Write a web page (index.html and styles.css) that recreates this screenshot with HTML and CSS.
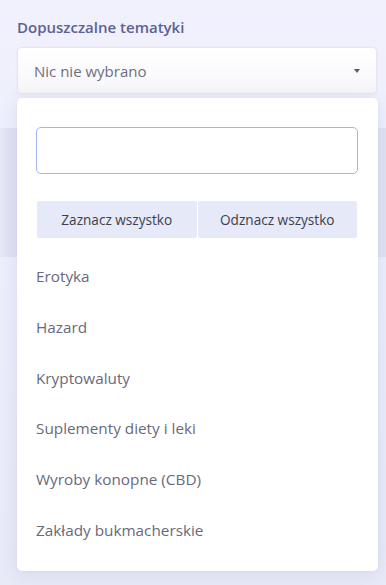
FILE: index.html
```html
<!DOCTYPE html>
<html lang="pl">
<head>
<meta charset="utf-8">
<title>Dopuszczalne tematyki</title>
<link rel="stylesheet" href="styles.css">
</head>
<body>
<div class="page">
  <div class="field">
    <label class="label">Dopuszczalne tematyki</label>
    <div class="select">
      <span class="select-text">Nic nie wybrano</span>
      <span class="caret"></span>
    </div>
    <div class="menu">
      <input class="search" type="text" aria-label="Szukaj">
      <div class="actions">
        <button class="action">Zaznacz wszystko</button>
        <button class="action">Odznacz wszystko</button>
      </div>
      <ul class="options">
        <li class="option">Erotyka</li>
        <li class="option">Hazard</li>
        <li class="option">Kryptowaluty</li>
        <li class="option">Suplementy diety i leki</li>
        <li class="option">Wyroby konopne (CBD)</li>
        <li class="option">Zakłady bukmacherskie</li>
      </ul>
    </div>
  </div>
</div>
<div class="band"></div>
</body>
</html>
```
FILE: styles.css
```css
html, body {
  margin: 0;
  padding: 0;
}
body {
  width: 386px;
  height: 585px;
  overflow: hidden;
  background: linear-gradient(180deg, #f0f1fd 0%, #eceefb 50%, #e8eaf8 100%);
  font-family: "Open Sans", "Noto Sans", sans-serif;
}
.page {
  padding: 17px 9px 0 17px;
}
.field {
  position: relative;
}
.label {
  display: block;
  font-size: 15px;
  line-height: 21px;
  font-weight: 600;
  color: #5d6193;
  margin-bottom: 9px;
}
.select {
  box-sizing: border-box;
  height: 47px;
  display: flex;
  align-items: center;
  justify-content: space-between;
  padding: 0 16px;
  background: linear-gradient(180deg, #ffffff 0%, #fafafc 60%, #f5f5f8 100%);
  border: 1px solid #e6e6ee;
  border-radius: 4px;
  box-shadow: 0 1px 3px rgba(60, 60, 110, 0.06);
}
.select-text {
  font-size: 15px;
  color: #6d6e82;
}
.caret {
  width: 0;
  height: 0;
  border-left: 3.5px solid transparent;
  border-right: 3.5px solid transparent;
  border-top: 4px solid #5b5b6a;
}
.menu {
  position: absolute;
  top: 81px;
  left: 0;
  width: 361px;
  box-sizing: border-box;
  padding: 29px 20px 15px 19px;
  background: #ffffff;
  border-radius: 5px;
  box-shadow: 0 4px 18px rgba(80, 90, 160, 0.12), 0 0 2px rgba(80, 90, 160, 0.08);
  z-index: 2;
}
.search {
  display: block;
  box-sizing: border-box;
  width: 100%;
  height: 47px;
  margin: 0;
  border: 1px solid #a7b2f5;
  border-radius: 5px;
  background: #ffffff;
  outline: none;
  font-family: inherit;
  font-size: 15px;
}
.actions {
  display: flex;
  gap: 1px;
  margin: 27px 1px 0 1px;
}
.action {
  flex: 1 1 0;
  height: 37px;
  border: none;
  border-radius: 2px;
  background: #e6e9f8;
  font-family: inherit;
  font-size: 13.6px;
  color: #3e3e4c;
  padding: 0;
}
.options {
  list-style: none;
  margin: 13px 0 0 0;
  padding: 0;
}
.option {
  padding: 15px 0;
  font-size: 15.3px;
  line-height: 20.8px;
  color: #69697b;
}
.band {
  margin-top: 34px;
  height: 129px;
  background: linear-gradient(90deg, #e6e8f6 0%, #e0e2f2 3%, #e0e2f2 100%);
}
```
